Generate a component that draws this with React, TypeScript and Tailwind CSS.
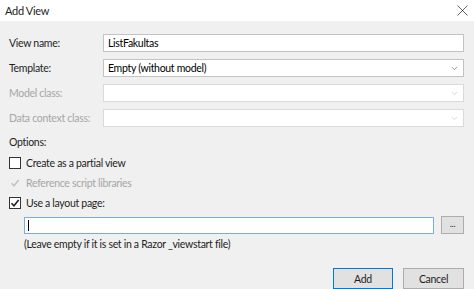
import { ChevronDown, X } from 'lucide-react'

const font = { fontFamily: 'Lato, "Liberation Sans", sans-serif' }

function Field({ label, value, disabled, select }: { label: string; value?: string; disabled?: boolean; select?: boolean }) {
  return (
    <div className="flex items-center h-[18px]">
      <div className={`w-[94px] shrink-0 whitespace-nowrap ${disabled ? 'text-[#a6a6a6]' : 'text-[#1e1e1e]'}`}>{label}</div>
      <div
        className={`flex-1 h-[18px] flex items-center pl-[4px] pr-[4px] bg-white border ${
          disabled ? 'border-[#dadada]' : 'border-[#c3c3c3]'
        }`}
      >
        <span className="flex-1 whitespace-nowrap leading-[14px]">{value}</span>
        {select && (
          <ChevronDown size={9} strokeWidth={2} className={disabled ? 'text-[#c8c8c8]' : 'text-[#707070]'} />
        )}
      </div>
    </div>
  )
}

function Check({ label, checked, disabled }: { label: string; checked?: boolean; disabled?: boolean }) {
  return (
    <div className="flex items-center h-[20px] gap-[5px]">
      <div
        className={`w-[12px] h-[12px] flex items-center justify-center border ${
          disabled ? 'border-transparent' : 'border-[#333333] bg-white'
        }`}
      >
        {checked && (
          <svg width="10" height="10" viewBox="0 0 10 10">
            <path
              d="M1.5 5.2 L4 7.8 L8.6 2"
              fill="none"
              stroke={disabled ? '#c4c4c4' : '#222222'}
              strokeWidth="1.6"
            />
          </svg>
        )}
      </div>
      <span className={`whitespace-nowrap ${disabled ? 'text-[#a6a6a6]' : 'text-[#1e1e1e]'}`}>{label}</span>
    </div>
  )
}

export default function App() {
  return (
    <div
      className="w-[474px] h-[289px] flex flex-col bg-[#f0f0f0] text-[10.5px] leading-[14px] tracking-[-0.3px] overflow-hidden"
      style={font}
    >
      {/* Title bar */}
      <div className="h-[24px] bg-white flex items-center pl-[5px] pr-[2px] text-[#1e1e1e]">
        <span className="flex-1 text-[11px]">Add View</span>
        <X size={19} strokeWidth={0.9} className="text-[#222222]" />
      </div>

      {/* Body */}
      <div className="flex-1 flex flex-col pl-[9px] pr-[10px] pt-[13px]">
        <div className="flex flex-col gap-[7px]">
          <Field label="View name:" value="ListFakultas" />
          <Field label="Template:" value="Empty (without model)" select />
          <Field label="Model class:" disabled select />
          <Field label="Data context class:" disabled select />
        </div>

        <div className="mt-[7px] h-[16px] flex items-center text-[#1e1e1e]">Options:</div>
        <div className="mt-[3px] flex flex-col">
          <Check label="Create as a partial view" />
          <Check label="Reference script libraries" checked disabled />
          <Check label="Use a layout page:" checked />
        </div>

        <div className="mt-[3px] ml-[15px] flex items-center gap-[7px]">
          <div className="flex-1 h-[17px] bg-white border border-[#7aaee0] flex items-center pl-[3px]">
            <div className="w-px h-[11px] bg-black" />
          </div>
          <button className="w-[23px] h-[18px] bg-[#e1e1e1] border border-[#adadad] text-[9px] text-[#333333] leading-none pb-[3px]">
            ...
          </button>
        </div>
        <div className="mt-[3px] ml-[15px] h-[14px] flex items-center text-[#1e1e1e] whitespace-nowrap">
          (Leave empty if it is set in a Razor _viewstart file)
        </div>

        <div className="mt-[17px] flex justify-end gap-[10px]">
          <button className="w-[60px] h-[21px] bg-[#e1e1e1] border border-[#0078d7] text-[#1e1e1e]">Add</button>
          <button className="w-[61px] h-[21px] bg-[#e1e1e1] border border-[#adadad] text-[#1e1e1e]">Cancel</button>
        </div>
      </div>
    </div>
  )
}
